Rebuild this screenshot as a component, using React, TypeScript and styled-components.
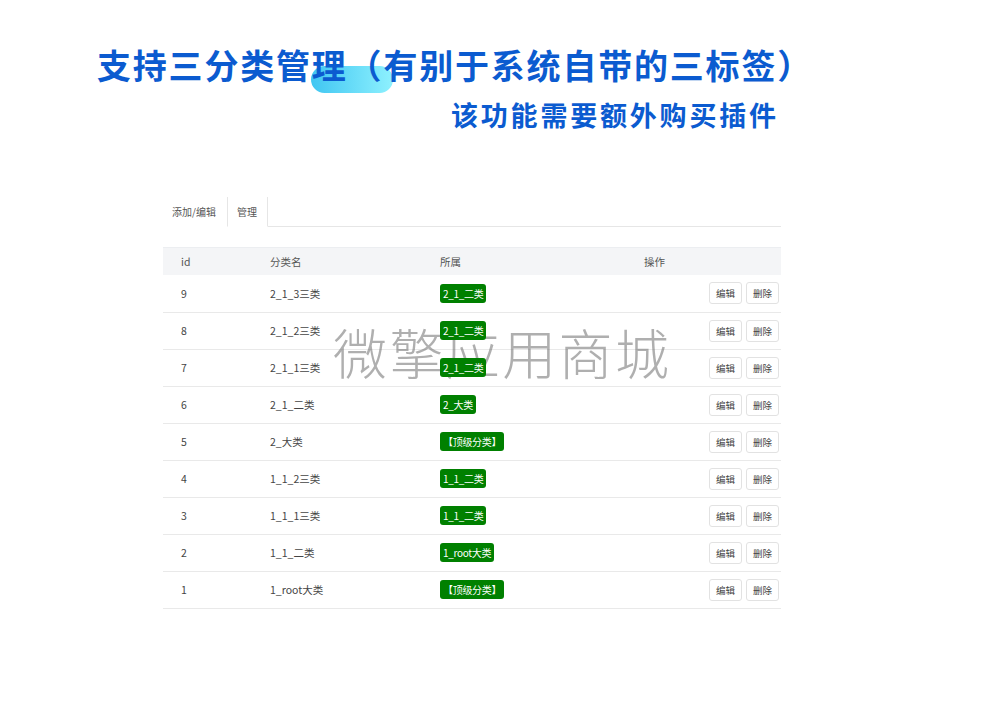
import styled, { createGlobalStyle } from 'styled-components';

interface Category {
  id: number;
  name: string;
  parent: string;
}

const rows: Category[] = [
  { id: 9, name: '2_1_3三类', parent: '2_1_二类' },
  { id: 8, name: '2_1_2三类', parent: '2_1_二类' },
  { id: 7, name: '2_1_1三类', parent: '2_1_二类' },
  { id: 6, name: '2_1_二类', parent: '2_大类' },
  { id: 5, name: '2_大类', parent: '【顶级分类】' },
  { id: 4, name: '1_1_2三类', parent: '1_1_二类' },
  { id: 3, name: '1_1_1三类', parent: '1_1_二类' },
  { id: 2, name: '1_1_二类', parent: '1_root大类' },
  { id: 1, name: '1_root大类', parent: '【顶级分类】' },
];

const GlobalStyle = createGlobalStyle`
  html, body {
    margin: 0;
    padding: 0;
    background: #fff;
    font-family: 'Noto Sans CJK SC', 'Noto Sans', sans-serif;
  }
`;

const Page = styled.div`
  width: 1000px;
  height: 707px;
  overflow: hidden;
  display: flex;
  flex-direction: column;
`;

const Heading = styled.div`
  padding: 40px 0 0 97px;
  display: flex;
  flex-direction: column;
`;

const TitleWrap = styled.div`
  position: relative;
  height: 50px;
`;

const Highlight = styled.div`
  position: absolute;
  left: 214px;
  top: 26px;
  width: 82px;
  height: 27px;
  border-radius: 14px;
  background: linear-gradient(90deg, #40c6f2 0%, #8ef1fe 100%);
`;

const Title = styled.h1`
  position: relative;
  margin: 0;
  font-size: 34px;
  line-height: 50px;
  font-weight: 700;
  letter-spacing: 1.8px;
  color: #0b5bd0;
  white-space: nowrap;
`;

const Subtitle = styled.h2`
  margin: 0;
  padding: 5px 0 0 354px;
  font-size: 27px;
  line-height: 40px;
  font-weight: 700;
  letter-spacing: 2.8px;
  color: #0b5bd0;
  white-space: nowrap;
`;

const Panel = styled.div`
  position: relative;
  margin: 62px 0 0 163px;
  width: 618px;
`;

const Tabs = styled.div`
  display: flex;
  height: 29px;
  border-bottom: 1px solid #e6e6e6;
`;

const Tab = styled.div<{ $active?: boolean }>`
  padding: 0 10px 0 ${(p) => (p.$active ? '9px' : '8px')};
  margin-bottom: -1px;
  display: flex;
  align-items: center;
  font-size: 10px;
  color: #555;
  background: #fff;
  border: 1px solid ${(p) => (p.$active ? '#e6e6e6' : 'transparent')};
  border-top: none;
  border-bottom-color: ${(p) => (p.$active ? '#fff' : 'transparent')};
`;

const Table = styled.table`
  margin-top: 20px;
  width: 100%;
  border-collapse: collapse;
  table-layout: fixed;
  font-size: 10.5px;
  color: #444;
`;

const HeadCell = styled.th<{ $w?: number }>`
  width: ${(p) => (p.$w ? `${p.$w}px` : 'auto')};
  height: 27px;
  padding: 0 0 0 18px;
  text-align: left;
  font-weight: 400;
  color: #555;
  background: #f4f5f7;
  border-top: 1px solid #eceef1;
`;

const Row = styled.tr`
  height: 37px;
  border-bottom: 1px solid #e9e9e9;
`;

const Cell = styled.td<{ $right?: boolean }>`
  padding: 0 ${(p) => (p.$right ? '2px' : '0')} 0 18px;
  text-align: ${(p) => (p.$right ? 'right' : 'left')};
  white-space: nowrap;
`;

const Badge = styled.span`
  position: relative;
  z-index: 2;
  display: inline-block;
  padding: 0 3px;
  line-height: 19px;
  border-radius: 3px;
  background: #008000;
  color: #fff;
  font-size: 10px;
  letter-spacing: -0.3px;
`;

const Button = styled.button`
  margin-left: 4px;
  width: 33px;
  height: 22px;
  padding: 0;
  border: 1px solid #e2e2e2;
  border-radius: 3px;
  background: #fff;
  color: #444;
  font-family: inherit;
  font-size: 9.5px;
`;

const Watermark = styled.div`
  position: absolute;
  left: 170px;
  top: 115px;
  z-index: 1;
  font-size: 54px;
  font-weight: 300;
  letter-spacing: 2.4px;
  color: rgba(110, 110, 110, 0.55);
  pointer-events: none;
  white-space: nowrap;
`;

export default function App() {
  return (
    <Page>
      <GlobalStyle />
      <Heading>
        <TitleWrap>
          <Highlight />
          <Title>支持三分类管理（有别于系统自带的三标签）</Title>
        </TitleWrap>
        <Subtitle>该功能需要额外购买插件</Subtitle>
      </Heading>

      <Panel>
        <Tabs>
          <Tab>添加/编辑</Tab>
          <Tab $active>管理</Tab>
        </Tabs>
        <Table>
          <thead>
            <tr>
              <HeadCell $w={71}>id</HeadCell>
              <HeadCell $w={152}>分类名</HeadCell>
              <HeadCell $w={186}>所属</HeadCell>
              <HeadCell>操作</HeadCell>
            </tr>
          </thead>
          <tbody>
            {rows.map((r) => (
              <Row key={r.id}>
                <Cell>{r.id}</Cell>
                <Cell>{r.name}</Cell>
                <Cell>
                  <Badge>{r.parent}</Badge>
                </Cell>
                <Cell $right>
                  <Button>编辑</Button>
                  <Button>删除</Button>
                </Cell>
              </Row>
            ))}
          </tbody>
        </Table>
        <Watermark>微擎应用商城</Watermark>
      </Panel>
    </Page>
  );
}
